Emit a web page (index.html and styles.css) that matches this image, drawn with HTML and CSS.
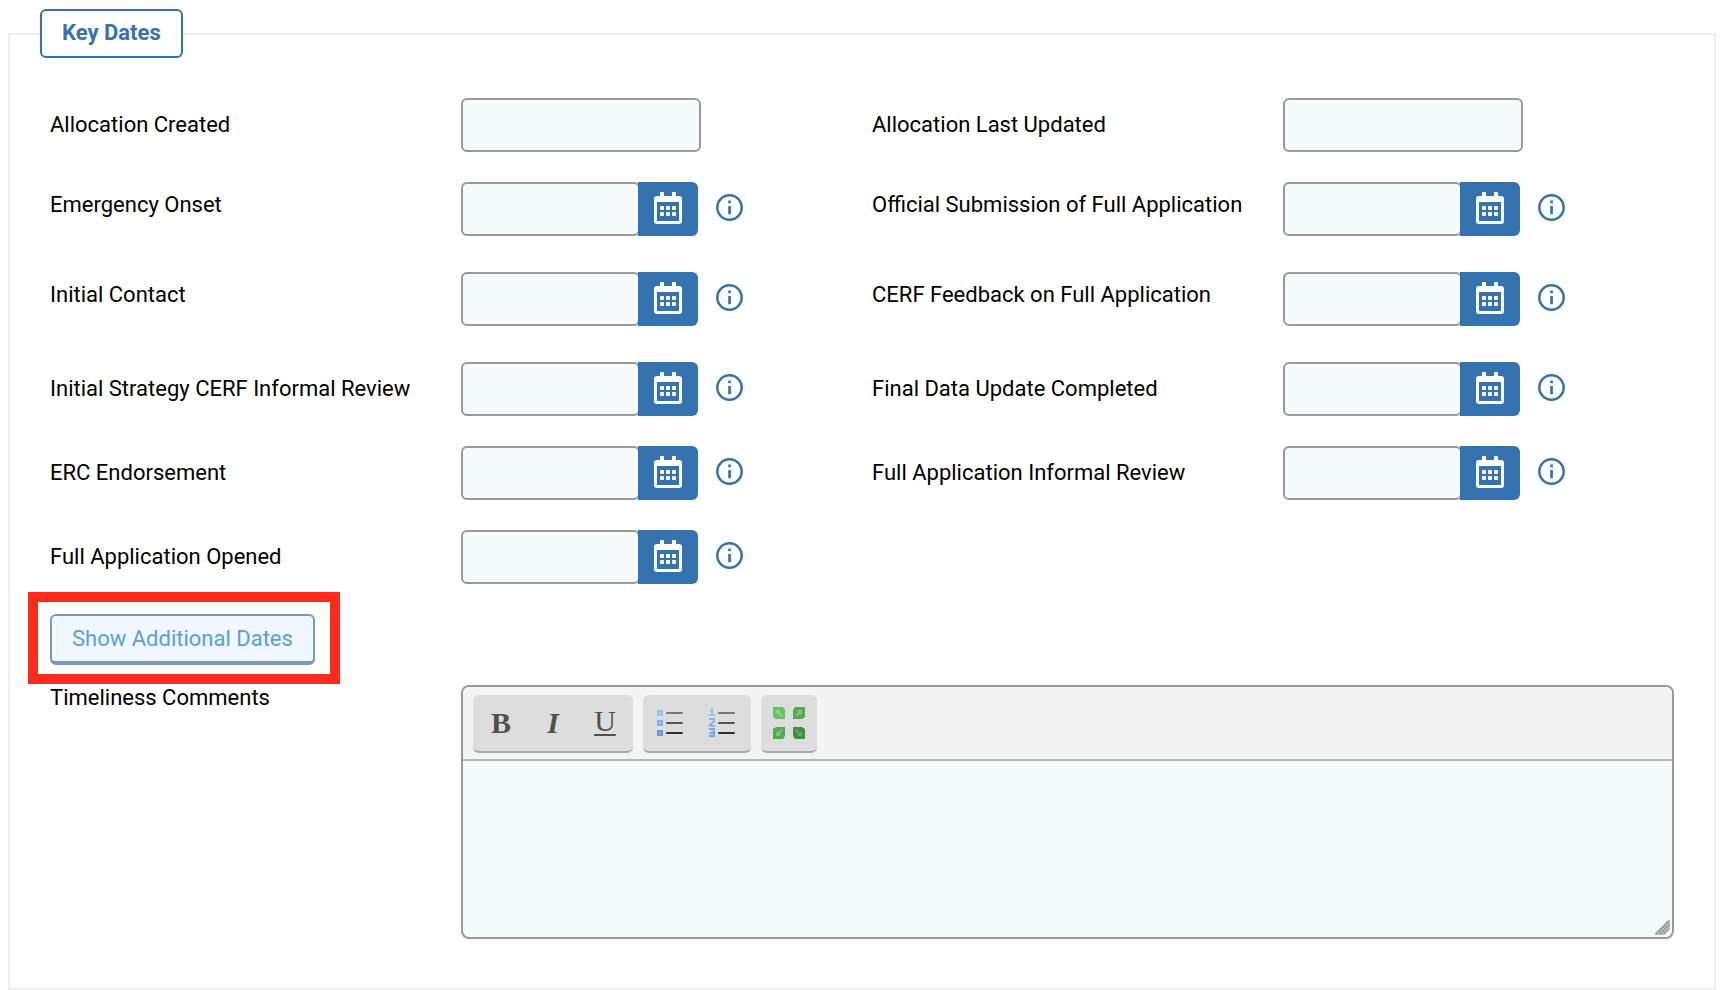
FILE: index.html
```
<!DOCTYPE html>
<html lang="en">
<head>
<meta charset="utf-8">
<title>Key Dates</title>
<link rel="stylesheet" href="styles.css">
</head>
<body>
<svg class="sprite" aria-hidden="true">
  <symbol id="calendar" viewBox="0 0 28 32">
    <path fill="currentColor" fill-rule="evenodd" d="M6 1a1 1 0 0 1 1-1h2a1 1 0 0 1 1 1V4h8V1a1 1 0 0 1 1-1h2a1 1 0 0 1 1 1V4h3a3 3 0 0 1 3 3v22a3 3 0 0 1-3 3H3a3 3 0 0 1-3-3V7a3 3 0 0 1 3-3h3zM3 10v19h22V10z"/>
    <g fill="currentColor"><rect x="6" y="14" width="4" height="4" rx="1"/><rect x="12" y="14" width="4" height="4" rx="1"/><rect x="18" y="14" width="4" height="4" rx="1"/><rect x="6" y="20" width="4" height="4" rx="1"/><rect x="12" y="20" width="4" height="4" rx="1"/><rect x="18" y="20" width="4" height="4" rx="1"/></g>
  </symbol>
  <symbol id="info" viewBox="0 0 27 27">
    <circle cx="13.500" cy="13.500" r="12.200" fill="none" stroke="currentColor" stroke-width="2.500"/>
    <path fill="currentColor" d="M12.200 6.500h2.700v2.700h-2.700zM12.200 12h2.700v8.300h-2.700z"/>
  </symbol>
</svg>
<fieldset class="panel">
  <legend class="panel-title">Key Dates</legend>
  <div class="grid">
    <label class="label" for="created">Allocation Created</label>
    <div class="field"><input class="box" id="created" type="text"></div>
    <label class="label" for="updated">Allocation Last Updated</label>
    <div class="field"><input class="box" id="updated" type="text"></div>

    <label class="label raised" for="onset">Emergency Onset</label>
    <div class="field spaced"><input class="box date" id="onset" type="text"><button class="pick" type="button" aria-label="Pick date"><svg><use href="#calendar"/></svg></button><button class="info" type="button" aria-label="Help"><svg><use href="#info"/></svg></button></div>
    <label class="label raised" for="submission">Official Submission of Full Application</label>
    <div class="field spaced"><input class="box date" id="submission" type="text"><button class="pick" type="button" aria-label="Pick date"><svg><use href="#calendar"/></svg></button><button class="info" type="button" aria-label="Help"><svg><use href="#info"/></svg></button></div>

    <label class="label raised" for="contact">Initial Contact</label>
    <div class="field spaced"><input class="box date" id="contact" type="text"><button class="pick" type="button" aria-label="Pick date"><svg><use href="#calendar"/></svg></button><button class="info" type="button" aria-label="Help"><svg><use href="#info"/></svg></button></div>
    <label class="label raised" for="feedback">CERF Feedback on Full Application</label>
    <div class="field spaced"><input class="box date" id="feedback" type="text"><button class="pick" type="button" aria-label="Pick date"><svg><use href="#calendar"/></svg></button><button class="info" type="button" aria-label="Help"><svg><use href="#info"/></svg></button></div>

    <label class="label" for="strategy">Initial Strategy CERF Informal Review</label>
    <div class="field"><input class="box date" id="strategy" type="text"><button class="pick" type="button" aria-label="Pick date"><svg><use href="#calendar"/></svg></button><button class="info" type="button" aria-label="Help"><svg><use href="#info"/></svg></button></div>
    <label class="label" for="final">Final Data Update Completed</label>
    <div class="field"><input class="box date" id="final" type="text"><button class="pick" type="button" aria-label="Pick date"><svg><use href="#calendar"/></svg></button><button class="info" type="button" aria-label="Help"><svg><use href="#info"/></svg></button></div>

    <label class="label" for="erc">ERC Endorsement</label>
    <div class="field"><input class="box date" id="erc" type="text"><button class="pick" type="button" aria-label="Pick date"><svg><use href="#calendar"/></svg></button><button class="info" type="button" aria-label="Help"><svg><use href="#info"/></svg></button></div>
    <label class="label" for="review">Full Application Informal Review</label>
    <div class="field"><input class="box date" id="review" type="text"><button class="pick" type="button" aria-label="Pick date"><svg><use href="#calendar"/></svg></button><button class="info" type="button" aria-label="Help"><svg><use href="#info"/></svg></button></div>

    <label class="label" for="opened">Full Application Opened</label>
    <div class="field"><input class="box date" id="opened" type="text"><button class="pick" type="button" aria-label="Pick date"><svg><use href="#calendar"/></svg></button><button class="info" type="button" aria-label="Help"><svg><use href="#info"/></svg></button></div>
  </div>

  <div class="more"><button class="more-button" type="button">Show Additional Dates</button></div>

  <div class="grid">
    <label for="comments">Timeliness Comments</label>
    <div class="editor">
      <div class="toolbar">
        <div class="group">
          <button class="tool bold" type="button" aria-label="Bold">B</button>
          <button class="tool italic" type="button" aria-label="Italic">I</button>
          <button class="tool underline" type="button" aria-label="Underline">U</button>
        </div>
        <div class="group">
          <button class="tool" type="button" aria-label="Bulleted list"><svg viewBox="0 0 32 32">
            <g stroke-width="2"><rect x="3" y="4" width="4" height="4" fill="#b3d2f3" stroke="#95c0ef"/><rect x="3" y="14" width="4" height="4" fill="#a5c6ef" stroke="#7fb0e8"/><rect x="3" y="24" width="4" height="4" fill="#8fb2e8" stroke="#6798df"/></g>
            <g stroke-width="2" stroke-linecap="round"><path stroke="#777" d="M12 6h15"/><path stroke="#555" d="M12 16h15"/><path stroke="#303030" d="M12 26h15"/></g></svg></button>
          <button class="tool" type="button" aria-label="Numbered list"><svg viewBox="0 0 32 32">
            <g fill="none" stroke-width="2"><path stroke="#9ac3ef" d="M3 4h2V1M5 3v5M2 8h6"/><path stroke="#88b6ec" d="M2 12h5v2l-4 4v1h5"/><path stroke="#78a8e6" d="M2 22h5v2l-3 2h3v3H2"/></g>
            <g stroke-width="2" stroke-linecap="round"><path stroke="#777" d="M12 6h15"/><path stroke="#555" d="M12 16h15"/><path stroke="#303030" d="M12 26h15"/></g></svg></button>
        </div>
        <div class="group">
          <button class="tool" type="button" aria-label="Maximize"><svg viewBox="0 0 32 32">
            <path fill="#6abf60" d="M0 0h10l2 3v9H3l-3-2z"/><path fill="#58aa50" d="M22 0h10v10l-3 2h-9V3z"/><path fill="#55a94e" d="M0 22l3-2h9v9l-2 3H0z"/><path fill="#458f41" d="M20 20h9l3 2v10H22l-2-3z"/>
            <g fill="none" stroke-width="2"><path stroke="#8fd186" d="M4 4l5 5M4 7V4h3"/><path stroke="#83c47b" d="M28 4l-5 5M25 4h3v3"/><path stroke="#80c278" d="M4 28l5-5M4 25v3h3"/><path stroke="#65a85f" d="M28 28l-5-5M25 28h3v-3"/></g></svg></button>
        </div>
      </div>
      <textarea class="text" id="comments"></textarea>
      <svg class="grip" viewBox="0 0 15 15" aria-hidden="true"><path fill="#b9bbbb" d="M0 15V13L13 0h2v9l-6 6z"/><path stroke="#8e9090" stroke-width="1.500" stroke-dasharray="2 1" d="M1 14L14 1M5 14L14 5M9 14l5-5"/></svg>
    </div>
  </div>
</fieldset>
</body>
</html>
```
FILE: styles.css
```
* { box-sizing: border-box; }

body {
  margin: 0;
  padding: 9px 16px 0 8px;
  background: #fff;
  color: #000;
  font: 22px/26px Roboto, "Liberation Sans", sans-serif;
}

button, input, textarea { font: inherit; }
button { margin: 0; padding: 0; border: 0; background: none; cursor: pointer; }
svg { display: block; }
.sprite { position: absolute; width: 0; height: 0; }

.panel {
  margin: 0;
  padding: 40px 20px 49px 30px;
  border: 2px solid #eee;
}

.panel-title {
  padding: 9px 20px 10px;
  border: 2px solid #3572b0;
  border-radius: 6px;
  background: #fff;
  color: #3572b0;
  font-weight: 700;
}

.grid {
  display: grid;
  grid-template-columns: repeat(4, minmax(0, 1fr));
  row-gap: 30px;
  padding-left: 10px;
}

.label { display: flex; align-items: center; height: 54px; }
.raised { height: 46px; }

.field { display: flex; align-items: center; height: 54px; }
.spaced { height: 60px; padding-bottom: 6px; }

.box {
  width: 240px;
  height: 54px;
  padding: 0 10px;
  border: 2px solid #999;
  border-radius: 6px;
  background: #f5fbfb;
}
.date { width: 179px; }

.pick {
  display: flex;
  align-items: center;
  justify-content: center;
  width: 60px;
  height: 54px;
  margin-left: -2px;
  border-radius: 0 6px 6px 0;
  background: #3572b0;
  color: #fff;
}
.pick svg { width: 28px; height: 32px; margin-bottom: 2px; }

.info { margin: 0 0 3px 18px; color: #3572b0; }
.info svg { width: 27px; height: 27px; }

.more {
  position: relative;
  width: fit-content;
  margin: 30px 0 20px 10px;
}
.more::after {
  content: "";
  position: absolute;
  inset: -22px -25px -19px -22px;
  border: 10px solid #fd2a1e;
  pointer-events: none;
}
.more-button {
  display: block;
  padding: 10px 20px 9px;
  border: 2px solid #7799ba;
  border-bottom-width: 4px;
  border-radius: 6px;
  background: #f0f7ff;
  color: #5c9edc;
}

.editor {
  position: relative;
  grid-column: 2 / -1;
  margin-right: 20px;
  overflow: hidden;
  border: 2px solid #999;
  border-radius: 8px;
  background: #f5fbfb;
}

.toolbar {
  display: flex;
  gap: 10px;
  padding: 8px 10px 6px;
  border-bottom: 2px solid #b6b6b6;
  background: #f4f4f4;
}

.group {
  display: flex;
  padding: 2px;
  border-bottom: 2px solid #aaa;
  border-radius: 6px;
  background: #ddd;
}

.tool {
  display: flex;
  align-items: center;
  justify-content: center;
  width: 52px;
  height: 52px;
  color: #505050;
  font: 30px/32px "Liberation Serif", serif;
}
.tool svg { width: 32px; height: 32px; }
.bold { font-weight: 700; }
.italic { font-weight: 700; font-style: italic; }
.underline {
  padding-bottom: 4px;
  text-decoration: underline 2px;
  text-underline-offset: 3px;
}

.text {
  display: block;
  width: 100%;
  height: 176px;
  padding: 10px;
  border: 0;
  background: transparent;
  resize: none;
}

.grip { position: absolute; right: 2px; bottom: 2px; width: 15px; height: 15px; }
```
